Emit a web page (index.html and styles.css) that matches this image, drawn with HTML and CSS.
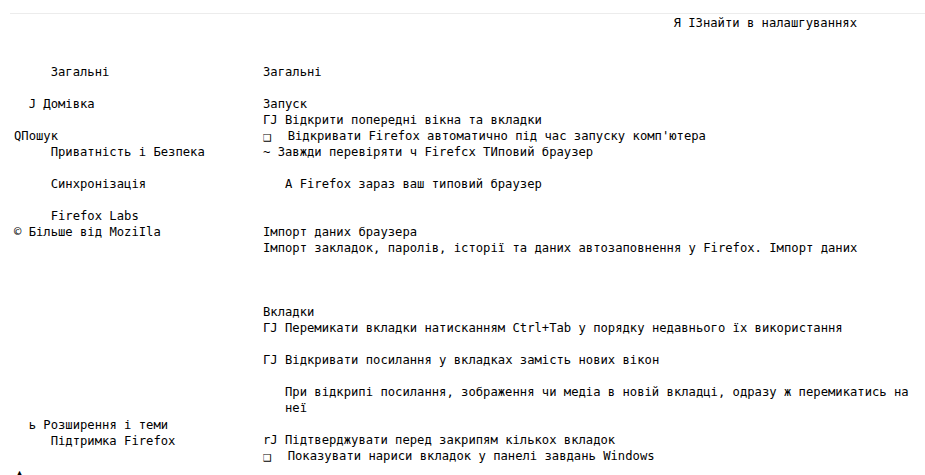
FILE: index.html
```html
<!DOCTYPE html>
<html lang="uk">
<head>
<meta charset="utf-8">
<title>Налаштування</title>
<link rel="stylesheet" href="styles.css">
</head>
<body>
  <header class="topbar">
    <div class="search">Я IЗнайти в налашгуваннях</div>
  </header>

  <div class="layout">
    <nav class="sidebar">
      <div class="nav-item in-5">Загальні</div>
      <div class="nav-item in-2 skip-1">Ј Домівка</div>
      <div class="nav-item skip-1">QПошук</div>
      <div class="nav-item in-5">Приватність і Безпека</div>
      <div class="nav-item in-5 skip-1">Синхронізація</div>
      <div class="nav-item in-5 skip-1">Firefox Labs</div>
      <div class="nav-item">© Більше від MoziIla</div>

      <div class="nav-footer">
        <div class="nav-item in-2">ь Розширення і теми</div>
        <div class="nav-item in-5">Підтримка Firefox</div>
        <div class="nav-item skip-1 arrow">▲</div>
      </div>
    </nav>

    <main class="content">
      <div class="row">Загальні</div>

      <section class="group skip-1">
        <div class="row">Запуск</div>
        <div class="row">ГЈ Відкрити попередні вікна та вкладки</div>
        <div class="row"><span class="box">❑</span>Відкривати Firefox автоматично під час запуску комп'ютера</div>
        <div class="row">~ Завжди перевіряти ч Firefcx ТИповий браузер</div>
        <div class="row in-3 skip-1">А Firefox зараз ваш типовий браузер</div>
      </section>

      <section class="group skip-2">
        <div class="row">Імпорт даних браузера</div>
        <div class="row">Імпорт закладок, паролів, історії та даних автозаповнення у Firefox. Імпорт даних</div>
      </section>

      <section class="group skip-3">
        <div class="row">Вкладки</div>
        <div class="row">ГЈ Перемикати вкладки натисканням Ctrl+Tab у порядку недавнього їх використання</div>
        <div class="row skip-1">ГЈ Відкривати посилання у вкладках замість нових вікон</div>
        <div class="row in-3 skip-1">При відкрипі посилання, зображення чи медіа в новій вкладці, одразу ж перемикатись на неї</div>
        <div class="row skip-1">rЈ Підтверджувати перед закрипям кількох вкладок</div>
        <div class="row"><span class="box">❑</span>Показувати нариси вкладок у панелі завдань Windows</div>
      </section>
    </main>
  </div>
</body>
</html>
```

FILE: styles.css
```css
html, body {
  margin: 0;
  padding: 0;
  background: #ffffff;
}

body {
  font-family: "DejaVu Sans Mono", "Liberation Mono", monospace;
  font-size: 12.2px;
  line-height: 16px;
  color: #000000;
  overflow: hidden;
  height: 475px;
}

/* thin rule across the top with the search field under it */
.topbar {
  margin: 13px 0 0 10px;
  border-top: 1px solid #ececec;
  display: flex;
  justify-content: flex-end;
  padding-right: 68px;
}

.search {
  white-space: pre;
  padding-top: 1px;
}

/* two columns: category list and the settings pane */
.layout {
  display: grid;
  grid-template-columns: 249px 1fr;
  padding: 33px 8px 0 14px;
}

.sidebar,
.content {
  display: flex;
  flex-direction: column;
}

.nav-item,
.row {
  white-space: pre-wrap;
}

.nav-footer {
  margin-top: 177px;
  display: flex;
  flex-direction: column;
}

.in-2 { padding-left: 2ch; }
.in-3 { padding-left: 3ch; }
.in-5 { padding-left: 5ch; }

.skip-1 { margin-top: 16px; }
.skip-2 { margin-top: 32px; }
.skip-3 { margin-top: 48px; }

.group {
  display: flex;
  flex-direction: column;
}

/* checkbox glyph takes a wider cell than a plain character */
.box {
  display: inline-block;
  width: 24.7px;
  font-size: 14px;
  line-height: 16px;
  vertical-align: top;
}

.arrow {
  font-size: 15px;
  line-height: 16px;
  padding-left: 1px;
  margin-top: 17px;
}
```
